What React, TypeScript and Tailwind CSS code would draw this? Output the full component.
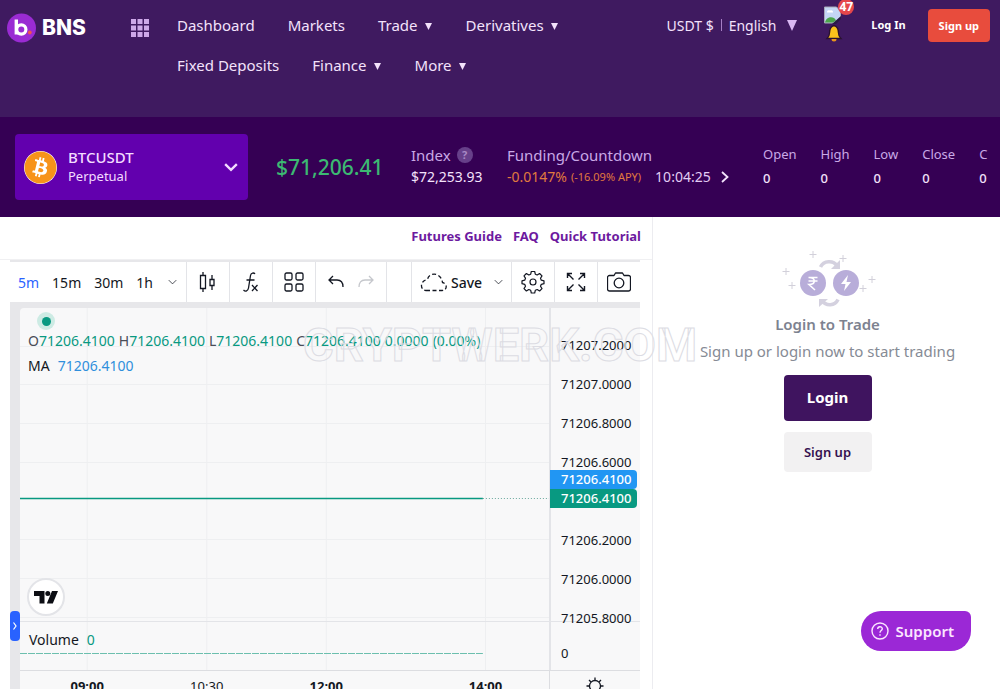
// Futures trading page: top navigation, ticker strip, price chart and login panel.

import type { ReactNode } from "react";
import { FaBitcoin } from "react-icons/fa";

const NAV = [
  { label: "Dashboard" },
  { label: "Markets" },
  { label: "Trade", menu: true },
  { label: "Derivatives", menu: true },
  { label: "Fixed Deposits" },
  { label: "Finance", menu: true },
  { label: "More", menu: true },
];

const STATS = ["Open", "High", "Low", "Close", "C"];
const INTERVALS = ["5m", "15m", "30m", "1h"];

// null is the row covered by the current price tags
const PRICES = ["71207.2000", "71207.0000", "71206.8000", "71206.6000", null, "71206.2000", "71206.0000", "71205.8000"];

const TICKS = [
  { x: "12.7%", label: "09:00", bold: true },
  { x: "35.3%", label: "10:30", bold: false },
  { x: "57.9%", label: "12:00", bold: true },
  { x: "88%", label: "14:00", bold: true },
];

const GRID_Y = [38, 76, 115, 154, 231, 270, 309];

function Chevron({ className }: { className?: string }) {
  return (
    <svg viewBox="0 0 12 8" className={className} fill="none" stroke="currentColor" aria-hidden="true">
      <path d="M1 1.5l5 5 5-5" />
    </svg>
  );
}

function Logo() {
  return (
    <a href="#" aria-label="BNS" className="flex w-[124px] shrink-0 items-center gap-1.5">
      <svg width="29" height="30" viewBox="0 0 29 30" aria-hidden="true">
        <circle cx="14.5" cy="15" r="14.5" fill="#9a2bd3" />
        <path d="M9.3 6.5v15" stroke="#fff" strokeWidth="3.4" />
        <circle cx="14.3" cy="16.5" r="4.6" fill="none" stroke="#fff" strokeWidth="3.2" />
        <circle cx="22.8" cy="19.5" r="1.9" fill="#f0524f" />
      </svg>
      <span className="font-['Inter',sans-serif] text-[21px] font-extrabold text-white">BNS</span>
    </a>
  );
}

function BellBadge() {
  return (
    <button type="button" aria-label="Notifications" className="relative h-[42px] w-[30px] shrink-0">
      <svg width="30" height="42" viewBox="0 0 30 42" aria-hidden="true">
        <path d="M1.500 7h12l4 4v6l-7 6h-9z" fill="#c5d6f5" stroke="#a9a9b8" />
        <path d="M2 22.500c1-6 9-7 11-2l-3 2z" fill="#4ca64c" />
        <path d="M4 12.500a2 2 0 0 1 3-2 2 2 0 0 1 3 2z" fill="#fff" />
        <path d="M9 24l9-8v3l-5 5z" fill="#2b1a45" />
        <path d="M11 25.500c-4 1-4.500 4-4.500 7.500 0 3-1 4-2.500 5.500h14c-1.500-1.500-2.500-2.500-2.500-5.500 0-3.500-.5-6.500-4.500-7.500z" fill="#fcc21b" stroke="#2a1230" strokeWidth="1.300" />
        <path d="M8.500 39a2.500 2.500 0 0 0 5 0z" fill="#e8951c" />
      </svg>
      <span className="absolute -right-px -top-px flex h-4 w-4 items-center justify-center rounded-full bg-[#e5474b] text-[12px] font-bold leading-none text-white">
        47
      </span>
    </button>
  );
}

function Header() {
  return (
    <header className="flex items-start bg-[#3f1a60] pl-[7px] pr-2.5 text-[#f3e2fb]">
      <div className="flex h-14 items-center">
        <Logo />
        <button type="button" aria-label="Apps" className="w-[46px]">
          <svg width="18" height="18" viewBox="0 0 18 18" fill="#cda8e8" aria-hidden="true">
            {[0, 6.5, 13].map((x) => [0, 6.5, 13].map((y) => <rect key={`${x}-${y}`} x={x} y={y} width="5" height="5" />))}
          </svg>
        </button>
      </div>
      <nav className="flex min-w-0 flex-1 flex-wrap gap-x-[33px] pb-8 pt-[5px] text-[15px] leading-10">
        {NAV.map((item) => (
          <a key={item.label} href="#" className="flex items-center gap-[7px] whitespace-nowrap">
            {item.label}
            {item.menu && (
              <svg width="8" height="12" viewBox="0 0 8 12" fill="currentColor" aria-hidden="true">
                <path d="M0 4h7l-3.500 7z" />
              </svg>
            )}
          </a>
        ))}
      </nav>
      <div className="flex shrink-0 items-start">
        <button type="button" className="flex h-[50px] items-center gap-[7px] text-[14px]">
          <span>USDT $</span>
          <span className="h-3 w-px bg-[#a67fc4]" />
          <span>English</span>
          <svg width="10" height="11" viewBox="0 0 10 11" fill="#d9b8f3" className="ml-1" aria-hidden="true">
            <path d="M0 0h10L5 11z" />
          </svg>
        </button>
        <div className="ml-[26px]">
          <BellBadge />
        </div>
        <a href="#" className="ml-[18px] text-[11px] font-bold leading-[50px] text-white">
          Log In
        </a>
        <a href="#" className="ml-[22px] mt-[9px] rounded bg-[#e84c3d] px-[11px] text-[11px] font-bold leading-[33px] text-white">
          Sign up
        </a>
      </div>
    </header>
  );
}

function Ticker() {
  return (
    <section className="flex h-[100px] shrink-0 items-center overflow-hidden whitespace-nowrap bg-[#350054] pl-[15px] text-[#c9a9e6]">
      <button type="button" className="flex h-[66px] w-[233px] shrink-0 items-center rounded bg-[#6200ae] pl-[9px] pr-2.5 text-left text-[#f3dcff]">
        <span className="rounded-full bg-white">
          <FaBitcoin size={33} color="#f7931a" />
        </span>
        <span className="ml-[11px] flex-1 pb-0.5">
          <span className="block text-[15px] font-medium leading-5">BTCUSDT</span>
          <span className="block text-[13px] leading-[18px]">Perpetual</span>
        </span>
        <Chevron className="h-[10px] w-[14px] stroke-2" />
      </button>
      <strong className="ml-7 w-[107px] shrink-0 pt-0.5 text-[21px] font-medium text-[#3cb972]">$71,206.41</strong>
      <div className="ml-7 w-24 shrink-0 pb-[3px]">
        <div className="flex items-center gap-1.5 text-[15px] leading-[22px]">
          Index
          <span className="flex h-4 w-4 items-center justify-center rounded-full bg-[#67408a] text-[11px] font-bold text-[#a889c4]">?</span>
        </div>
        <div className="text-[14px] leading-[21px] text-[#f3e2fb]">$72,253.93</div>
      </div>
      <div className="w-[256px] shrink-0 pb-[3px]">
        <div className="text-[15px] leading-[22px]">Funding/Countdown</div>
        <div className="flex items-center text-[14px] leading-[21px]">
          <span className="text-[#e07a3e]">-0.0147%</span>
          <span className="ml-1 text-[11px] text-[#e07a3e]">(-16.09% APY)</span>
          <span className="ml-[14px] text-[#e2cdf3]">10:04:25</span>
          <svg width="8" height="12" viewBox="0 0 8 12" fill="none" stroke="#f3e2fb" strokeWidth="1.800" className="ml-2.5" aria-hidden="true">
            <path d="M1 1l5.500 5L1 11" />
          </svg>
        </div>
      </div>
      <dl className="flex gap-6 pb-0.5 text-[13px] leading-6">
        {STATS.map((name) => (
          <div key={name}>
            <dt>{name}</dt>
            <dd className="font-medium text-[#f3e2fb]">0</dd>
          </div>
        ))}
      </dl>
    </section>
  );
}

function Tool({ label, children }: { label: string; children: ReactNode }) {
  return (
    <button type="button" aria-label={label} className="flex h-full w-[42px] items-center justify-center bg-white">
      {children}
    </button>
  );
}

function Toolbar() {
  return (
    <div className="ml-2.5 mr-3 flex h-11 items-stretch gap-px border-y-2 border-[#e7e7ea] bg-[#e3e4e8] text-[14px] text-[#131722]">
      <div className="flex w-[176px] items-center gap-[13px] bg-white pl-2">
        {INTERVALS.map((name, i) => (
          <button key={name} type="button" className={i === 0 ? "text-[#2962ff]" : ""}>
            {name}
          </button>
        ))}
        <Chevron className="ml-0.5 h-[6px] w-[9px]" />
      </div>
      <Tool label="Candles">
        <svg width="20" height="24" viewBox="0 0 20 24" fill="none" stroke="currentColor" strokeWidth="1.300" aria-hidden="true">
          <path d="M2.500 5.500h5v13h-5zM5 2v3.500M5 18.500V22M12 9.500h4v6h-4zM14 5v4.500M14 15.500V20" />
        </svg>
      </Tool>
      <Tool label="Indicators">
        <svg width="20" height="24" viewBox="0 0 20 24" fill="none" stroke="currentColor" strokeWidth="1.300" aria-hidden="true">
          <path d="M14 4c-1-1.500-4-1.500-4.500 1.500L7.500 18c-.5 3-3 4-5 2M5.500 10h8M11 15l5.500 6M16.500 15L11 21" />
        </svg>
      </Tool>
      <Tool label="Templates">
        <svg width="20" height="20" viewBox="0 0 20 20" fill="none" stroke="currentColor" strokeWidth="1.300" aria-hidden="true">
          <rect x="1" y="1" width="7" height="7" rx="1.500" />
          <rect x="12" y="1" width="7" height="7" rx="1.500" />
          <rect x="1" y="12" width="7" height="7" rx="1.500" />
          <rect x="12" y="12" width="7" height="7" rx="1.500" />
        </svg>
      </Tool>
      <div className="flex w-[70px] items-center justify-center gap-3.5 bg-white">
        <button type="button" aria-label="Undo">
          <svg width="16" height="14" viewBox="0 0 16 14" fill="none" stroke="currentColor" strokeWidth="1.300" aria-hidden="true">
            <path d="M5 1L1 5l4 4M1 5h8c4 0 6 2.500 6 7" />
          </svg>
        </button>
        <button type="button" aria-label="Redo" className="text-[#c5c7cc]">
          <svg width="16" height="14" viewBox="0 0 16 14" fill="none" stroke="currentColor" strokeWidth="1.300" aria-hidden="true">
            <path d="M11 1l4 4-4 4M15 5H7c-4 0-6 2.500-6 7" />
          </svg>
        </button>
      </div>
      <div className="flex-1 bg-white" />
      <button type="button" className="flex w-[99px] items-center bg-white pl-2">
        <svg width="27" height="20" viewBox="0 0 27 20" fill="none" stroke="currentColor" strokeWidth="1.300" strokeDasharray="4 2.500" aria-hidden="true">
          <path d="M6 18.500h16c5.500 0 5.500-7 .5-8C21 0 9 0 7.500 7.500 0 8.500-.5 18 6 18.500z" />
        </svg>
        <span className="ml-1 mr-3 font-medium">Save</span>
        <Chevron className="h-[6px] w-[9px]" />
      </button>
      <Tool label="Settings">
        <svg width="24" height="24" viewBox="0 0 24 24" fill="none" stroke="currentColor" strokeWidth="1.200" strokeLinejoin="round" aria-hidden="true">
          <path d="M10.300 1.500h3.400l.6 2.700 1.900.8 2.400-1.500 2.400 2.400-1.500 2.400.8 1.900 2.700.6v2.900l-2.700.6-.8 1.900 1.500 2.400-2.400 2.400-2.400-1.500-1.900.8-.6 2.700h-3.400l-.6-2.700-1.900-.8L5.400 21 3 18.600l1.500-2.400-.8-1.900-2.700-.6v-2.900l2.700-.6.8-1.900L3 5.900l2.400-2.400L7.800 5l1.900-.8z" />
          <circle cx="12" cy="12" r="3" />
        </svg>
      </Tool>
      <Tool label="Fullscreen">
        <svg width="20" height="20" viewBox="0 0 20 20" fill="none" stroke="currentColor" strokeWidth="1.400" aria-hidden="true">
          <path d="M1.500 6V1.500H6M1.500 1.500l6 6M14 1.500h4.500V6M18.500 1.500l-6 6M1.500 14v4.500H6M1.500 18.500l6-6M14 18.500h4.500V14M18.500 18.500l-6-6" />
        </svg>
      </Tool>
      <Tool label="Snapshot">
        <svg width="24" height="20" viewBox="0 0 24 20" fill="none" stroke="currentColor" strokeWidth="1.300" strokeLinejoin="round" aria-hidden="true">
          <path d="M2.500 3.500H7L8.500 1h7L17 3.500h4.500a2 2 0 0 1 2 2V17a2 2 0 0 1-2 2h-19a2 2 0 0 1-2-2V5.500a2 2 0 0 1 2-2z" />
          <circle cx="12" cy="11" r="4.800" />
        </svg>
      </Tool>
    </div>
  );
}

function Legend() {
  return (
    <div className="absolute left-2 top-1 text-[14px] text-[#131722]">
      <span className="ml-[9px] flex h-[18px] w-[18px] items-center justify-center rounded-full bg-[#cdebe4]">
        <span className="h-[9px] w-[9px] rounded-full bg-[#089981]" />
      </span>
      <div className="flex gap-1 whitespace-nowrap text-[#089981]">
        {["O", "H", "L", "C"].map((k) => (
          <span key={k}>
            <span className="text-[#4a4d57]">{k}</span>71206.4100
          </span>
        ))}
        <span>0.0000</span>
        <span>(0.00%)</span>
      </div>
      <div className="mt-1 flex gap-2 text-[#2f8fdc]">
        <span className="text-[#131722]">MA</span>71206.4100
      </div>
    </div>
  );
}

function Chart() {
  return (
    <div className="relative ml-2.5 mr-3 bg-[#e7e7ea] pl-2.5 pt-1">
      <div className="grid grid-cols-[minmax(0,1fr)_91px] rounded-tl bg-[#f8f8f9]">
        <div className="relative h-[362px]">
          <svg width="100%" height="362" className="block" aria-hidden="true">
            {TICKS.map((t) => (
              <line key={t.x} x1={t.x} x2={t.x} y1="0" y2="362" stroke="#eeeff1" />
            ))}
            {GRID_Y.map((y) => (
              <line key={y} x1="0" x2="100%" y1={y + 0.5} y2={y + 0.5} stroke="#eeeff1" />
            ))}
            <line x1="0" x2="87.500%" y1="190.500" y2="190.500" stroke="#089981" strokeWidth="1.500" />
            <line x1="87.500%" x2="100%" y1="190.500" y2="190.500" stroke="#6aa99c" strokeDasharray="1 2" />
            <line x1="0" x2="100%" y1="313.500" y2="313.500" stroke="#e3e4e8" />
            <line x1="0" x2="87.500%" y1="345.500" y2="345.500" stroke="#6cbfae" strokeDasharray="7 1" />
          </svg>
          <Legend />
          <a href="#" aria-label="TradingView" className="absolute left-[7px] top-[270px] flex h-[38px] w-[38px] items-center justify-center rounded-full border-2 border-[#e3e4e8] bg-white">
            <svg width="24" height="13" viewBox="0 0 24 13" fill="#0c0e14" aria-hidden="true">
              <path d="M0 0h10.500v12.500H5.500V5H0zM18 0h6l-5.200 12.500h-6z" />
              <circle cx="13.800" cy="2.500" r="2.500" />
            </svg>
          </a>
          <div className="absolute left-[9px] top-[321px] flex gap-2 text-[14px] text-[#131722]">
            Volume <span className="text-[#089981]">0</span>
          </div>
        </div>
        <div className="relative border-l-2 border-[#e3e4e8] text-[13px] text-[#131722]">
          <div className="grid h-[314px] grid-rows-[repeat(8,39px)] border-b border-[#e3e4e8] pl-2.5 pt-[18px]">
            {PRICES.map((p, i) => (
              <span key={i} className="leading-[39px]">
                {p}
              </span>
            ))}
          </div>
          <div className="pl-2.5 pt-[22px] leading-[18px]">0</div>
          <div className="absolute -left-px right-[3px] top-[162px] rounded-r-sm bg-[#2196f3] pl-[11px] font-medium leading-[19px] text-white">71206.4100</div>
          <div className="absolute -left-px right-[3px] top-[181px] rounded-r-sm bg-[#089981] pl-[11px] font-medium leading-[19px] text-white">71206.4100</div>
        </div>
        <div className="border-t border-[#dcdde1]">
          <svg width="100%" height="28" className="block" fill="#131722">
            {TICKS.map((t) => (
              <text key={t.label} x={t.x} y="20" textAnchor="middle" fontSize="13" fontWeight={t.bold ? 700 : 400}>
                {t.label}
              </text>
            ))}
          </svg>
        </div>
        <button type="button" aria-label="Axis settings" className="flex items-center justify-center border-l border-t border-[#dcdde1] pt-0.5">
          <svg width="20" height="20" viewBox="0 0 20 20" fill="none" stroke="#131722" strokeWidth="1.300" aria-hidden="true">
            <circle cx="10" cy="10" r="5.500" />
            <path d="M10 1.500v3M10 15.500v3M1.500 10h3M15.500 10h3M4 4l2 2M14 14l2 2M4 16l2-2M14 6l2-2" />
          </svg>
        </button>
      </div>
      <button type="button" aria-label="Show panel" className="absolute left-0 top-[307px] flex h-[30px] w-2.5 items-center justify-center rounded bg-[#2962ff] text-white">
        <svg width="4" height="8" viewBox="0 0 4 8" fill="none" stroke="currentColor" strokeWidth="1.200" aria-hidden="true">
          <path d="M.5.5L3 4 .5 7.500" />
        </svg>
      </button>
    </div>
  );
}

function CoinsArt() {
  return (
    <svg width="96" height="58" viewBox="-2 0 96 58" fill="none" aria-hidden="true">
      <circle cx="31" cy="33" r="13" fill="#b8add9" />
      <circle cx="64" cy="33" r="13" fill="#b8add9" />
      <path d="M26.500 27.500h9M26.500 31h9M27 27.500c7 0 7 7 0 7l6 5.500" stroke="#fff" strokeWidth="1.600" />
      <path d="M66 25l-7 9h4.500L62 41l7-9h-4.500z" fill="#fff" />
      <path d="M38.500 17c3-6.500 13-7 16.500-1" stroke="#d4d1df" strokeWidth="3.500" />
      <path d="M58 10v9h-9z" fill="#d4d1df" />
      <path d="M56 49.500c-3 6.500-12 7-16 1" stroke="#d4d1df" strokeWidth="3.500" />
      <path d="M37 57v-8h9z" fill="#d4d1df" />
      <path d="M31 1v7M27.500 4.500h7M61 5v7M57.500 8.500h7M4 18v7M.5 21.500h7M10 32v7M6.500 35.500h7M90 26v7M86.500 29.500h7M81 35v7M77.500 38.500h7" stroke="#d2d0da" />
    </svg>
  );
}

function LoginPanel() {
  return (
    <aside className="flex flex-col items-center border-l border-[#ececf0] pl-0.5 pt-[33px]">
      <CoinsArt />
      <h2 className="mt-1 text-[15px] font-semibold leading-6 text-[#7d8290]">Login to Trade</h2>
      <p className="mt-[3px] whitespace-nowrap text-[15px] leading-6 text-[#868b95]">Sign up or login now to start trading</p>
      <a href="#" className="mt-3 w-[88px] rounded bg-[#3f145f] pb-0.5 text-center text-[15px] font-bold leading-[44px] text-white">
        Login
      </a>
      <a href="#" className="mt-[11px] w-[88px] rounded bg-[#f2f1f2] text-center text-[13px] font-semibold leading-10 text-[#35104f]">
        Sign up
      </a>
    </aside>
  );
}

export default function App() {
  return (
    <div className="flex h-screen flex-col overflow-hidden bg-white font-['Noto_Sans','Open_Sans',sans-serif]">
      <Header />
      <Ticker />
      <main className="relative grid flex-1 grid-cols-[minmax(0,652fr)_minmax(0,348fr)]">
        <section>
          <div className="flex h-[43px] items-center justify-end gap-[11px] border-b border-[#f0f0f2] pr-[11px] pb-0.5 text-[13px] font-bold text-[#6d1a9f]">
            <a href="#">Futures Guide</a>
            <a href="#">FAQ</a>
            <a href="#">Quick Tutorial</a>
          </div>
          <Toolbar />
          <Chart />
        </section>
        <LoginPanel />
        <div className="pointer-events-none absolute inset-x-0 top-[100px] text-center font-['Roboto',sans-serif] text-[47px] font-bold leading-[56px] text-transparent [-webkit-text-stroke:1px_#dcdce3]">
          CRYPTWERK.COM
        </div>
      </main>
      <button type="button" className="fixed bottom-[38px] right-[29px] flex h-10 items-center gap-[7px] rounded-[20px] rounded-tr-[6px] bg-[#9b28d6] pl-2.5 pr-[17px] text-[15px] font-semibold text-[#fbe6ff]">
        <svg width="18" height="18" viewBox="0 0 18 18" fill="none" stroke="currentColor" strokeWidth="1.400" aria-hidden="true">
          <circle cx="9" cy="9" r="8" />
          <path d="M6.700 7c0-3 4.600-3 4.600-.2 0 1.700-2.300 1.900-2.300 3.900M9 12.300v1.500" />
        </svg>
        Support
      </button>
    </div>
  );
}
